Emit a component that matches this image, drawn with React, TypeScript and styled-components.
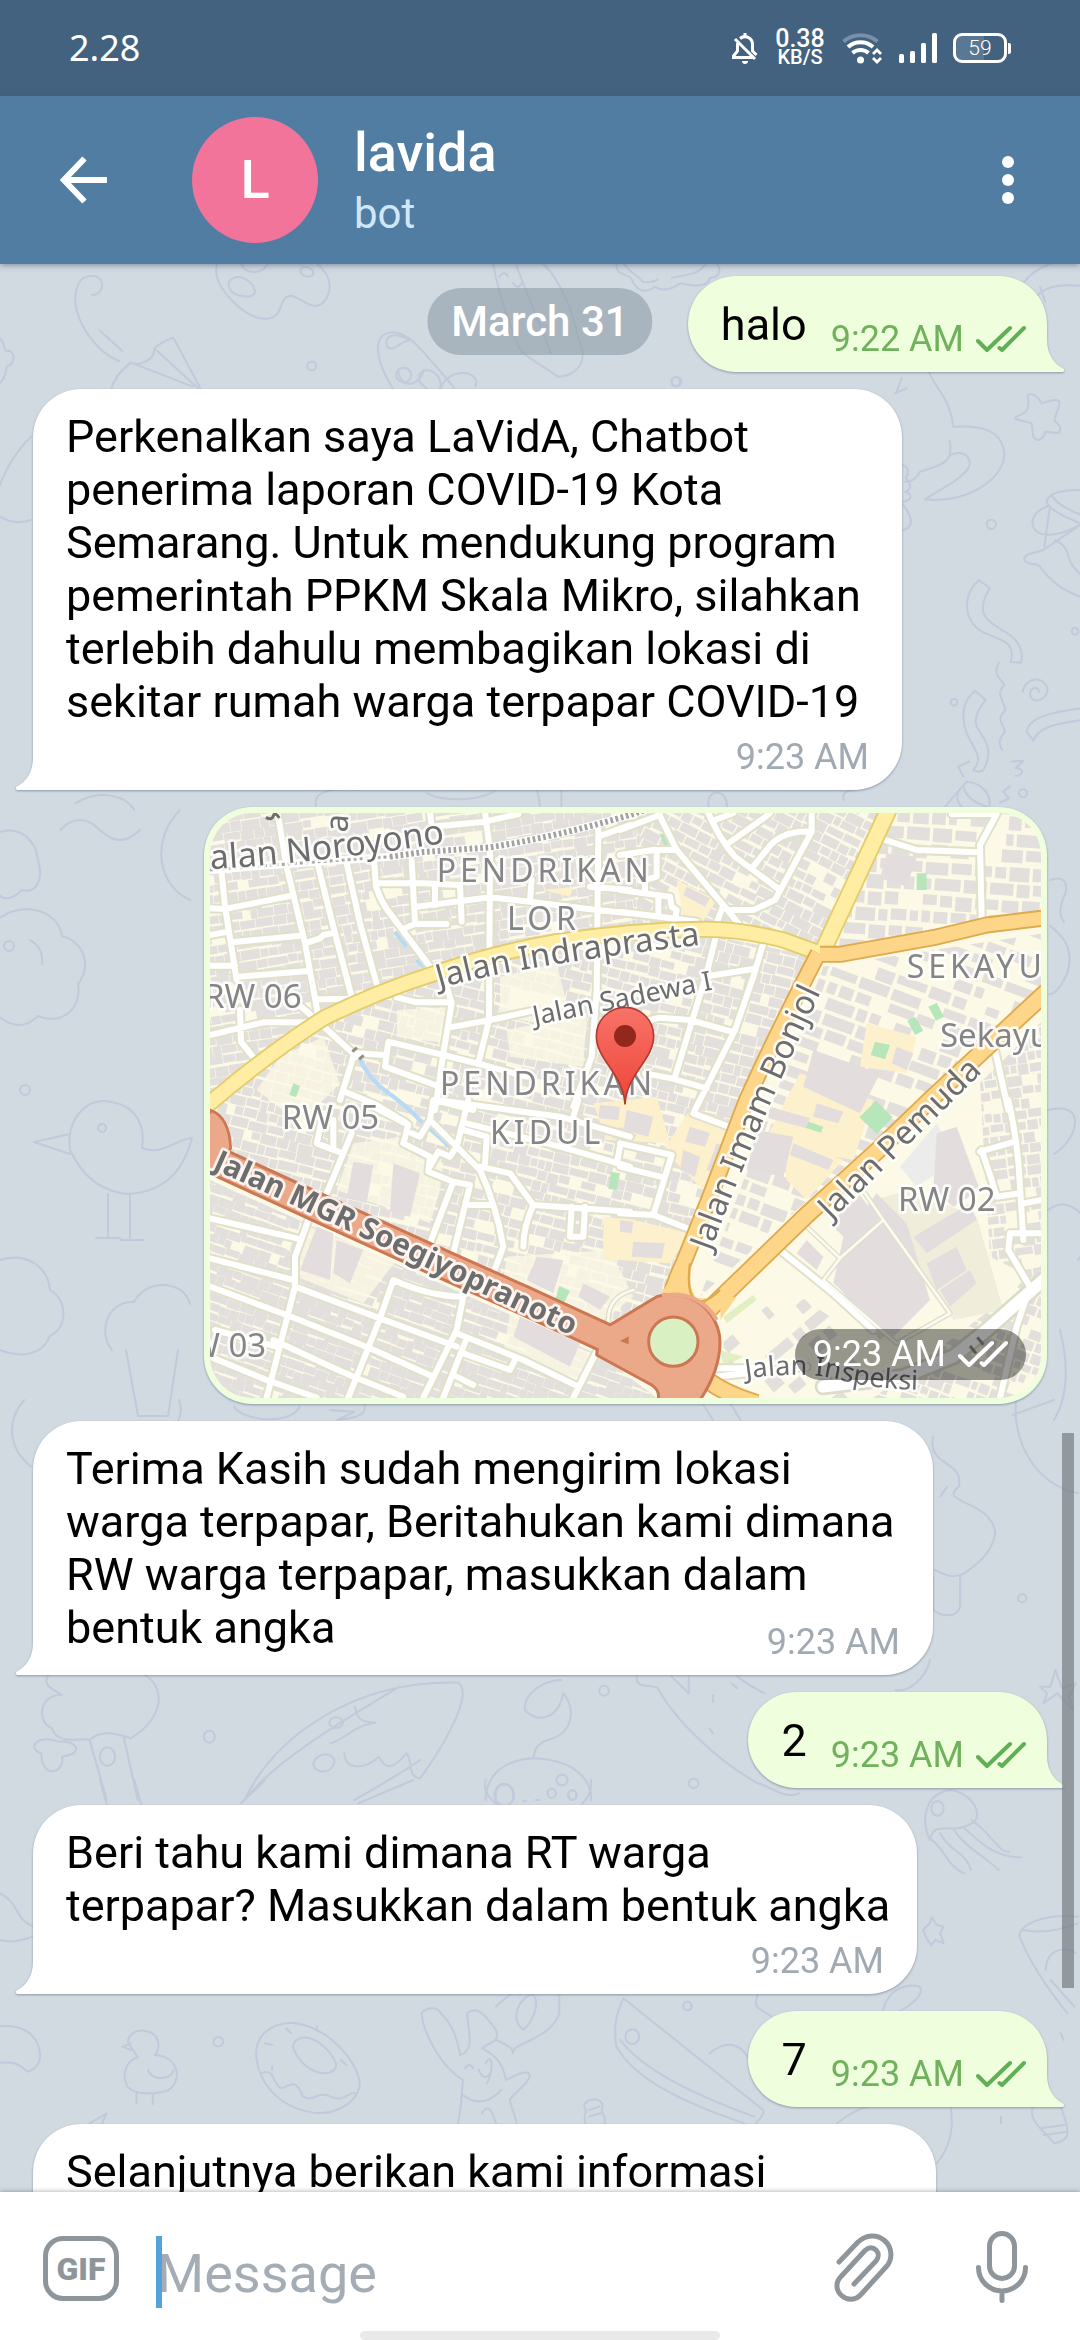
import React from 'react';
import styled, { createGlobalStyle, css } from 'styled-components';

const GlobalStyle = createGlobalStyle`
  *, *::before, *::after { box-sizing: border-box; }
  html, body { margin: 0; padding: 0; }
  body { font-family: Roboto, 'Noto Sans', sans-serif; background: #fff; }
  button { appearance: none; border: 0; padding: 0; background: none; font: inherit; color: inherit; cursor: pointer; }
`;

/* ---------- shell ---------- */

const Screen = styled.div`
  display: flex;
  flex-direction: column;
  height: 100vh;
  overflow: hidden;
`;

const StatusBar = styled.div`
  display: flex;
  align-items: center;
  justify-content: space-between;
  flex: none;
  height: 96px;
  padding: 0 69px;
  background: #43627f;
  color: #fff;
`;

const Clock = styled.time`
  font-family: 'Noto Sans', sans-serif;
  font-size: 36px;
  line-height: 50px;
`;

const StatusIcons = styled.div`
  display: flex;
  align-items: center;
  gap: 16px;
`;

const NetSpeed = styled.div`
  display: flex;
  flex-direction: column;
  align-items: center;
  width: 52px;
  font-weight: 500;
`;

const NetLine = styled.span<{ $size: number; $line: number }>`
  font-size: ${(p) => p.$size}px;
  line-height: ${(p) => p.$line}px;
`;

const Battery = styled.div`
  position: relative;
  display: flex;
  align-items: center;
  justify-content: center;
  width: 54px;
  height: 30px;
  margin-right: 4px;
  border: 3px solid #fff;
  border-radius: 9px;
  background: linear-gradient(90deg, #5a7793 59%, transparent 59%);
  font-size: 21px;
  font-weight: 300;
  line-height: 24px;

  &::after {
    content: '';
    position: absolute;
    right: -7px;
    top: 7px;
    width: 3px;
    height: 11px;
    border-radius: 0 2px 2px 0;
    background: #fff;
  }
`;

const Header = styled.header`
  position: relative;
  z-index: 2;
  display: flex;
  align-items: center;
  flex: none;
  height: 168px;
  padding: 0 36px 0 48px;
  background: #517da2;
  color: #fff;
  box-shadow: 0 1px 6px rgba(60, 80, 100, 0.6);
`;

const IconButton = styled.button`
  display: flex;
  align-items: center;
  justify-content: center;
  flex: none;
  width: 72px;
  height: 96px;
`;

const Avatar = styled.div`
  display: flex;
  align-items: center;
  justify-content: center;
  flex: none;
  width: 126px;
  height: 126px;
  margin: 0 36px 0 72px;
  border-radius: 50%;
  background: #f2749a;
  font-size: 54px;
  font-weight: 500;
  line-height: 64px;
`;

const Titles = styled.div`
  display: flex;
  flex-direction: column;
  flex: 1;
  gap: 4px;
  min-width: 0;
`;

const Title = styled.h1`
  margin: 0;
  font-size: 54px;
  font-weight: 500;
  line-height: 64px;
`;

const Subtitle = styled.span`
  color: #d0e7fa;
  font-size: 42px;
  line-height: 50px;
`;

/* ---------- conversation ---------- */

const Chat = styled.main`
  position: relative;
  flex: 1;
  min-height: 0;
  overflow: hidden;
  background: #d1d9e1;
`;

const Wallpaper = styled.svg`
  position: absolute;
  inset: 0;
  width: 100%;
  height: 100%;
`;

const MessageList = styled.ol`
  position: relative;
  display: flex;
  flex-direction: column;
  gap: 17px;
  margin: 0;
  padding: 12px 33px 0;
  list-style: none;
`;

const Row = styled.li<{ $out?: boolean }>`
  display: flex;
  justify-content: ${(p) => (p.$out ? 'flex-end' : 'flex-start')};
`;

const bubbleBase = css`
  position: relative;
  max-width: 100%;
  filter: drop-shadow(0 1px 1px rgba(90, 112, 130, 0.6));
`;

const IncomingBubble = styled.div<{ $width: number }>`
  ${bubbleBase}
  display: flow-root;
  width: ${(p) => p.$width}px;
  padding: 21px 24px 12px 33px;
  border-radius: 48px 48px 48px 0;
  background: #fff;
`;

const OutgoingBubble = styled.div`
  ${bubbleBase}
  display: flex;
  align-items: flex-end;
  gap: 24px;
  height: 96px;
  padding: 0 21px 12px 33px;
  border-radius: 48px 48px 0 48px;
  background: #effedd;
`;

const Text = styled.p<{ $inline?: boolean; $tall?: boolean }>`
  margin: 0;
  color: #000;
  font-size: 45px;
  line-height: 53px;
  padding-bottom: ${(p) => (p.$inline ? 9 : 0)}px;
  min-height: ${(p) => (p.$tall ? 156 : 0)}px;
`;

const Stamp = styled.time<{ $tone: 'in' | 'out' | 'media' }>`
  display: flex;
  align-items: center;
  justify-content: flex-end;
  gap: 12px;
  padding-right: ${(p) => (p.$tone === 'in' ? 9 : 0)}px;
  font-size: 36px;
  line-height: 42px;
  white-space: nowrap;
  color: ${(p) => ({ in: '#a1aab3', out: '#70b15c', media: '#fff' })[p.$tone]};
`;

const LastLine = styled.div`
  display: flex;
  align-items: flex-end;
  justify-content: space-between;
`;

const BelowText = styled.div`
  margin-top: 8px;
`;

const TailShape = styled.svg<{ $out?: boolean }>`
  position: absolute;
  bottom: 0;
  ${(p) => (p.$out ? 'right: -17px; transform: scaleX(-1);' : 'left: -17px;')}
`;

const MapBubble = styled.div`
  ${bubbleBase}
  width: 843px;
  padding: 6px;
  border-radius: 48px;
  background: #effedd;
`;

const MapDrawing = styled.svg`
  display: block;
  width: 100%;
  height: auto;
  border-radius: 42px;
`;

const MediaStamp = styled.div`
  position: absolute;
  right: 21px;
  bottom: 24px;
  padding: 4px 18px 5px;
  border-radius: 26px;
  background: rgba(0, 0, 0, 0.4);
`;

const DatePill = styled.time`
  position: absolute;
  top: 24px;
  left: 50%;
  transform: translateX(-50%);
  padding: 9px 24px 8px;
  border-radius: 34px;
  background: rgba(135, 152, 164, 0.55);
  color: #fff;
  font-size: 42px;
  font-weight: 500;
  line-height: 50px;
  white-space: nowrap;
`;

const ScrollThumb = styled.div`
  position: absolute;
  right: 6px;
  top: 1169px;
  width: 12px;
  height: 555px;
  background: rgba(118, 124, 130, 0.7);
`;

/* ---------- composer ---------- */

const Composer = styled.form`
  position: relative;
  z-index: 2;
  flex: none;
  background: #fff;
  box-shadow: 0 -1px 4px rgba(60, 70, 80, 0.35);
`;

const ComposerRow = styled.div`
  display: flex;
  align-items: center;
  height: 139px;
  padding: 14px 52px 0 43px;
`;

const GifButton = styled.button`
  flex: none;
  width: 76px;
  height: 65px;
  border: 5px solid #8e969c;
  border-radius: 20px;
  color: #8e969c;
  font-size: 32px;
  font-weight: 900;
  line-height: 54px;
  text-align: center;
`;

const Field = styled.label`
  position: relative;
  flex: 1;
  min-width: 0;
  margin-left: 37px;
`;

const Caret = styled.span`
  position: absolute;
  left: 0;
  top: 3px;
  width: 6px;
  height: 72px;
  background: #55a1db;
`;

const Input = styled.input`
  display: block;
  width: 100%;
  height: 72px;
  padding: 9px 0 0 1px;
  border: 0;
  outline: 0;
  background: transparent;
  color: #000;
  font-family: inherit;
  font-size: 54px;
  line-height: 63px;
  caret-color: transparent;

  &::placeholder { color: #a4adb5; opacity: 1; }
`;

const Tools = styled.div`
  display: flex;
  gap: 82px;
`;

const HomeBar = styled.div`
  width: 33.4%;
  height: 9px;
  margin: 0 auto;
  border-radius: 5px;
  background: #e9e9e9;
`;

/* ---------- icons ---------- */

const BackIcon = () => (
  <svg width="48" height="48" viewBox="0 0 48 48" fill="none" stroke="#fff" strokeWidth="6">
    <path d="M24.5 2.5 4 24l20.500 21.500M4 24h43" />
  </svg>
);

const DotsIcon = () => (
  <svg width="12" height="48" viewBox="0 0 12 48" fill="#fff">
    <circle cx="6" cy="6" r="6" />
    <circle cx="6" cy="24" r="6" />
    <circle cx="6" cy="42" r="6" />
  </svg>
);

const BellOffIcon = () => (
  <svg width="26" height="32" viewBox="0 0 26 32" fill="none" stroke="#fff" strokeWidth="3">
    <path d="M13 1v3M8 6.500c5-4 12.500-1 12.500 6V19l4 4M5.500 11v8L1.500 24v1.500H21" />
    <path d="M3 7l20 20" />
    <path d="M10 29h6a3 3 0 0 1-6 0z" fill="#fff" stroke="none" />
  </svg>
);

const WifiIcon = () => (
  <svg width="41" height="32" viewBox="0 0 41 32" fill="none" stroke="#fff" strokeWidth="4">
    <path d="M1.500 9.500C11 1 26 1 35.500 9.500" stroke="#7890a8" />
    <path d="M6 15C13 8.500 24 8.500 31 15" />
    <path d="M10.500 21c4.500-4 11.500-4 16 0" />
    <circle cx="18.500" cy="28" r="3.500" fill="#fff" stroke="none" />
    <path d="M31 22l4-4 4 4M31 26l4 4 4-4" strokeWidth="2.800" />
  </svg>
);

const SignalIcon = () => (
  <svg width="38" height="32" viewBox="0 0 38 32" fill="#fff">
    <rect x="0" y="22" width="5" height="9" rx="1.500" />
    <rect x="11" y="19" width="5" height="12" rx="1.500" />
    <rect x="22" y="11" width="5" height="20" rx="1.500" />
    <rect x="33" y="1" width="5" height="30" rx="1.500" />
  </svg>
);

const ChecksIcon = ({ color }: { color: string }) => (
  <svg width="50" height="28" viewBox="0 0 50 28" fill="none" stroke={color} strokeWidth="4" strokeLinecap="round" strokeLinejoin="round">
    <path d="M2 16l9 9L34 3M23.500 23l2.500 2L48 3" />
  </svg>
);

const ClipIcon = () => (
  <svg width="60" height="72" viewBox="0 0 60 72" fill="none" stroke="#8e969c" strokeWidth="5" strokeLinecap="round" strokeLinejoin="round">
    <path d="M5 31 24 11C32 3.500 43 3 50.500 9.500c8 7 8.500 19 1.500 26.500L26 64.500c-5 5-13 5-18.500 0-6-5.500-6-13.500-.5-19L31 19.500c3.500-3.500 8-3.500 11-.500 3 3 3 7.500 0 11L20 53" />
  </svg>
);

const MicIcon = () => (
  <svg width="52" height="72" viewBox="0 0 52 72" fill="none" stroke="#8e969c" strokeWidth="5" strokeLinecap="round">
    <rect x="13.500" y="2.500" width="25" height="45" rx="12.500" />
    <path d="M2.500 36.500a23.500 23.500 0 0 0 47 0M26 61v8.500" />
  </svg>
);

const Tail = ({ out }: { out?: boolean }) => (
  <TailShape $out={out} width="18" height="32" viewBox="0 0 18 32" fill={out ? '#effedd' : '#fff'}>
    <path d="M17 0C17 14 10 24 1 28.500c-2 1-1 3.500 1 3.500h16V0z" />
  </TailShape>
);

/* ---------- wallpaper doodles ---------- */

const doodles: { t: string; d: string[] }[] = [
  {
    t: 'scale(.3444 .3333)',
    d: [
      'M268 885C290 885 300 865 295 845C285 822 245 822 228 850C205 900 225 960 260 1010C285 1045 310 1070 345 1083',
      'M288 990L355 1053',
      'M380 1088C350 1110 330 1140 320 1175M380 1088C400 1098 450 1085 448 1045C465 1030 485 1020 503 1013L582 1165M448 1045L575 1165M380 1088L560 1160',
      'M635 780C620 810 630 845 650 872C690 930 740 960 775 956C830 950 805 890 845 887C870 890 890 920 920 918C960 905 965 850 945 820C935 800 920 790 905 780',
      'M665 845C690 815 730 840 740 870C745 900 690 890 672 875C664 865 662 855 665 845zM700 790C710 825 760 825 778 790M872 812C880 790 910 805 910 822C905 835 875 832 872 812z',
      'M1140 1165C1090 1080 1080 1010 1130 998C1180 990 1210 1030 1320 1165M1122 1030C1120 1000 1150 1000 1190 1020C1160 1025 1150 1050 1135 1045C1125 1045 1122 1040 1122 1030z',
      'M1150 1125a22 22 0 1 0 44 0a22 22 0 1 0 -44 0M1240 1165C1200 1140 1215 1105 1250 1112C1285 1130 1285 1160 1270 1180',
      'M892 1098a13 13 0 1 0 26 0a13 13 0 1 0 -26 0M0 1015C15 1030 10 1060 25 1052C45 1060 45 1090 20 1100C15 1130 10 1140 -10 1160',
      'M1430 780C1440 850 1470 950 1510 1050C1540 1080 1580 1100 1620 1130C1660 1130 1700 1100 1690 1050L1660 940C1640 880 1600 800 1560 780M1500 800L1600 1060M1450 830q15 -20 25 0M1490 850q15 20 25 0',
      'M1790 790C1785 830 1830 820 1835 840C1855 890 1890 870 1900 860C1930 880 1960 860 1975 850C2010 860 2060 860 2060 835C2100 830 2090 800 2080 790M1810 790C1840 830 1860 830 1865 845C1880 850 1900 845 1910 838M1950 835C1970 825 2030 830 2050 790',
      'M2970 850C3000 810 3040 790 3090 780M3000 900C3030 860 3070 850 3140 858M3020 860l15 45M1950 1145a14 14 0 1 0 28 0a14 14 0 1 0 -28 0',
    ],
  },
  {
    t: 'translate(895 370) scale(.3333)',
    d: [
      'M400 90C390 65 420 65 440 100C460 95 495 80 493 100C490 130 470 150 482 155C500 170 500 190 485 188L452 185C440 215 425 215 415 200L410 160C380 150 355 150 362 142C380 130 405 130 400 90z',
      'M100 0C115 50 165 80 175 170C260 165 320 180 328 250C325 340 200 400 90 388C130 360 220 320 225 280C220 245 190 245 165 255C150 290 100 295 75 305C60 330 50 335 30 335M163 212C170 230 165 245 163 255',
      'M20 285C45 290 40 310 32 325C50 340 50 360 30 365C50 370 55 390 25 395M25 405C50 440 60 470 25 480M0 70L35 55M5 65L20 25',
      'M275 463a14 14 0 1 0 28 0a14 14 0 1 0 -28 0M167 997a10 10 0 1 0 20 0a10 10 0 1 0 -20 0M530 784a10 10 0 1 0 20 0a10 10 0 1 0 -20 0M372 1270a12 12 0 1 0 24 0a12 12 0 1 0 -24 0',
      'M560 360C500 358 455 370 455 400C480 430 520 445 560 462M470 375C480 400 520 420 560 435M460 408C400 430 400 480 440 492C480 500 520 485 555 465L445 540M465 410L448 530M445 540C420 550 385 550 388 570C400 590 420 575 435 590C470 640 510 665 560 682M480 510C540 540 500 570 560 615',
      'M252 630L285 655C230 740 290 760 345 795C380 820 385 860 378 878L347 876C365 810 310 810 260 785C200 745 205 670 252 630z',
      'M312 878C290 920 320 925 328 945C300 975 325 985 332 1020C300 1050 325 1060 330 1085C310 1110 310 1120 322 1140',
      'M383 965C390 920 450 915 458 960C450 1000 405 1000 405 970C410 950 430 950 432 965M240 962L272 990C200 1080 280 1080 280 1150C275 1200 260 1215 235 1200C280 1150 205 1120 205 1040C205 1000 220 980 240 962z',
      'M560 1015C480 1025 400 1040 395 1085L415 1112C430 1070 490 1060 560 1050M350 1175L385 1172L362 1195C390 1195 385 1215 362 1218M190 1190L222 1175M190 1190L205 1220M345 1248L325 1265L342 1285L315 1298',
      'M150 1310L215 1235C260 1240 290 1270 283 1310M190 1270Q180 1290 200 1310M205 1245Q210 1290 275 1310',
    ],
  },
  {
    t: 'translate(0 370) scale(.6888 .3333)',
    d: [
      'M45 200C10 270 0 350 -10 390M0 440C15 460 30 460 45 450',
      'M578 0C580 60 610 50 615 0M640 55C650 -10 700 0 690 50M975 35a6 14 0 1 0 12 0a6 14 0 1 0 -12 0',
      'M110 1300C140 1260 180 1270 195 1320M460 1320C450 1260 480 1255 520 1260M620 1270C650 1300 700 1290 720 1260M780 1260L785 1320M815 1260V1320M1030 1320C1020 1250 1060 1250 1055 1320M1225 1290C1220 1260 1240 1260 1240 1260',
    ],
  },
  {
    t: 'translate(0 790)',
    d: [
      'M0 42C20 36 36 50 38 70C44 90 36 104 22 100C10 112 0 110 -4 100M4 156a5 5 0 1 0 10 0a5 5 0 1 0 -10 0',
      'M0 128C20 112 58 118 62 146C84 152 92 176 78 194C82 220 60 236 38 226C24 240 8 236 -4 224M30 150q14 8 12 24',
      'M70 360C66 330 86 306 112 312C136 316 146 336 142 358C164 366 172 350 192 348C182 386 160 402 128 404C104 402 84 390 70 360zM70 344L34 352L70 364M108 404V446M130 404V448M96 448h24M120 450h24M98 338a4 4 0 1 0 8 0a4 4 0 1 0-8 0',
      'M0 470C26 462 48 476 50 500C68 510 68 538 50 546C42 566 20 568 0 560M180 20C150 50 158 96 190 110M60 40q20 -20 40 0q20 20 40 0',
      'M112 560C96 540 110 510 134 512C146 488 184 490 190 514M126 560L138 626H168L178 560M20 300a5 5 0 1 0 10 0a5 5 0 1 0 -10 0',
      'M1050 90q18 -6 16 12q-10 20 -2 30M1050 136q28 20 16 50q-10 20 -18 18M1048 320c40-10 30 30 6 44M1048 420c26-20 56 20 30 50M1060 540c10 40 6 70-6 90',
    ],
  },
  {
    t: 'translate(0 1400) scale(.6888 .3333)',
    d: [
      'M35 0C10 60 10 140 45 200M260 0C265 30 262 50 258 65M340 20C350 60 420 80 435 20M480 30L515 35L490 60C540 50 530 20 528 0',
      'M1020 10L1035 60M1060 10L1075 60M1355 110C1345 200 1400 180 1392 260C1360 310 1440 300 1445 400C1440 460 1420 490 1400 520C1380 540 1370 520 1356 510M1355 530V630C1370 655 1390 650 1394 620V525M1375 260L1365 290',
      'M1470 45L1530 0M1475 0C1470 120 1500 250 1565 280M1478 595a6 12 0 1 0 12 0a6 12 0 1 0 -12 0M870 872a7 15 0 1 0 14 0a7 15 0 1 0 -14 0M296 1010a8 18 0 1 0 16 0a8 18 0 1 0 -16 0',
      'M1510 860L1525 860L1532 810L1542 865L1562 850L1552 890L1558 930L1535 880L1515 910L1520 880z',
      'M70 825C60 860 80 870 90 885C60 880 50 960 75 985C85 1040 120 1010 130 1020C150 980 180 1010 190 1015C240 950 240 860 210 825M130 1020L155 1200M180 1015L200 1200M85 1025C50 1000 40 1050 60 1060C60 1140 95 1120 90 1070C125 1060 110 1020 85 1025M145 1070a11 28 0 1 0 22 0a11 28 0 1 0 -22 0',
      'M355 1200C400 1000 520 840 665 848C690 880 640 1050 610 1135C590 1130 600 1080 590 1060C570 1110 560 1110 550 1070C530 1110 500 1110 500 1060M580 860C500 960 400 1080 355 1200M610 1080C560 1150 530 1180 515 1200M515 920C520 970 530 965 545 968C510 980 500 1020 480 1030M478 968a10 16 0 1 0 20 0a10 16 0 1 0 -20 0M455 1090C460 1050 490 1060 485 1090C480 1125 455 1120 455 1090z',
      'M815 840C790 840 760 880 762 930C780 970 810 960 818 880C835 920 835 1000 795 1020C780 1030 775 1050 775 1075C720 1080 705 1150 705 1200M775 1075C840 1080 860 1150 858 1200M720 1200C715 1130 750 1140 745 1200M808 1140a8 16 0 1 0 16 0a8 16 0 1 0 -16 0M825 1185a6 14 0 1 0 12 0a6 14 0 1 0 -12 0',
      'M925 830C920 870 950 850 955 865C980 960 1040 1080 1100 1150C1120 1160 1140 1200 1160 1180M975 830L1000 880L1000 830M1035 885v20M1062 850l8 15M1030 985l5 15M1070 830Q1090 860 1110 880M1300 870C1320 880 1345 830 1350 780M1000 1150a7 14 0 1 0 14 0a7 14 0 1 0 -14 0',
    ],
  },
  {
    t: 'translate(0 1780) scale(.6888 .3333)',
    d: [
      'M145 0L155 73M195 0L205 73M350 70L385 0M520 70L600 0M705 0C700 40 715 60 720 72M858 0C860 40 850 60 845 72M718 45a14 32 0 1 0 28 0a14 32 0 1 0 -28 0M795 40a6 14 0 1 0 12 0a6 14 0 1 0 -12 0M825 45a6 14 0 1 0 12 0a6 14 0 1 0 -12 0M760 62h4M778 60h4',
      'M1350 180C1335 110 1345 40 1380 30C1410 40 1420 90 1418 100C1422 130 1400 140 1390 145C1370 150 1355 130 1350 180zM1352 85a9 22 0 1 0 18 0a9 22 0 1 0 -18 0M1350 175C1370 200 1375 260 1400 280M1365 160C1380 220 1400 210 1410 270M1385 150C1400 200 1430 230 1450 270M1400 145C1420 180 1440 230 1482 232M1410 120C1440 160 1450 220 1465 215',
      'M1340 450L1350 430L1353 412L1360 435L1370 440L1365 460L1370 490L1358 480L1352 495L1345 475z',
      'M1565 410C1520 400 1480 430 1480 470C1490 520 1510 600 1550 700M1485 450C1510 460 1540 450 1565 430M1518 570C1520 500 1550 500 1562 520M1525 600L1560 680',
      'M-5 740C30 730 55 760 58 820C60 850 50 870 40 875C30 860 25 840 -5 850M0 340C30 370 20 420 50 440M0 480C20 490 30 480 48 470',
      'M190 800C180 780 190 750 210 752C235 760 232 810 225 825C260 830 265 900 245 930C225 945 195 945 185 920C175 880 185 840 200 832zM190 790L178 800L190 810M215 870C220 905 250 900 252 870M198 940V970M222 942V972M310 785a7 14 0 1 0 14 0a7 14 0 1 0 -14 0',
      'M372 830C370 770 390 730 425 728C480 740 525 860 522 920C515 980 480 1005 455 998C400 980 375 900 372 830zM425 800C430 750 470 770 488 850C490 900 440 890 425 800zM380 880C400 860 395 920 410 925C425 910 430 900 440 950C455 970 460 930 480 950C500 970 510 930 515 940M415 745l8 15M460 740v12M385 790l10 5M495 840l8 15M395 860v10',
      'M665 1030C670 980 670 950 672 900C640 860 615 760 612 700C620 680 635 680 640 700C660 740 665 790 668 825C690 810 680 760 678 700C690 680 700 690 720 750C728 790 705 790 700 805C725 830 730 860 735 900C745 890 760 870 768 880C775 900 745 940 740 960C745 1000 750 1020 750 1030M675 865q6 -20 12 0M695 870q8 40 18 5M705 850c10 -40 12 20 2 60M672 945Q700 990 728 930M700 1000Q710 960 720 1030',
      'M720 680C740 640 750 630 755 645M720 780C730 790 745 800 745 820C740 790 800 780 812 700V645M755 740C740 700 760 640 775 645C785 680 770 730 760 750zM992 678a6 13 0 1 0 12 0a6 13 0 1 0 -12 0',
      'M905 655C895 700 890 740 895 800C920 890 980 960 1080 1030M905 655L1108 990C1110 1010 1100 1020 1098 1030M900 780C930 860 990 930 1095 1010M908 770a10 22 0 1 0 20 0a10 22 0 1 0 -20 0M1030 820C1060 770 1080 800 1090 850M1100 645C1090 690 1110 690 1120 710M1282 690C1290 620 1320 610 1335 620C1345 650 1310 690 1305 695',
      'M850 1030C845 1000 855 1000 848 980C850 950 875 950 875 980C870 1000 880 1000 878 1030M855 990L870 980M855 1010L872 1000M130 1030L155 1000L148 1030M1215 1030Q1240 990 1260 980M1380 980C1385 1040 1380 1100 1360 1150M1500 980C1490 1020 1520 1060 1530 1090C1560 1080 1550 1040 1540 980M1510 1045L1545 1035M1515 1065L1550 1055M1453 1010v20M1540 760l4 20',
    ],
  },
];

const Doodles = () => (
  <Wallpaper viewBox="0 264 1080 1928" preserveAspectRatio="xMidYMin slice" aria-hidden="true">
    <g fill="none" stroke="#c2c9db" strokeWidth="2" strokeLinecap="round" strokeLinejoin="round">
      {doodles.map((g, i) => (
        <g key={i} transform={g.t}>
          {g.d.map((d, j) => (
            <path key={j} d={d} vectorEffect="non-scaling-stroke" />
          ))}
        </g>
      ))}
    </g>
  </Wallpaper>
);

/* ---------- city map ---------- */

type Region = { area: string; angle: number; w: number; h: number; gap: number; fill: number; seed: number };

const regions: Region[] = [
  { area: 'M60 69H1340V425L1100 455 735 540 400 680 60 940z', angle: -9, w: 42, h: 30, gap: 2, fill: 0.93, seed: 3 },
  { area: 'M1340 69H2095L1880 480 1530 418 1340 425z', angle: 27, w: 42, h: 32, gap: 4, fill: 0.92, seed: 8 },
  { area: 'M60 950 400 690 735 550 1100 470 1530 430 1880 500 1670 930 1450 1500 1240 1640 60 1100z', angle: 14, w: 42, h: 32, gap: 3, fill: 0.9, seed: 5 },
  { area: 'M60 1170 1240 1700 1400 1824H60z', angle: 19, w: 40, h: 28, gap: 1, fill: 0.97, seed: 12 },
  { area: 'M2110 69H2560V370L1930 480z', angle: 4, w: 60, h: 50, gap: 10, fill: 0.8, seed: 21 },
  { area: 'M1900 530 2560 430V600L1530 1520z', angle: 20, w: 72, h: 46, gap: 11, fill: 0.74, seed: 14 },
  { area: 'M2370 880 2560 690V1480L2400 1400z', angle: -8, w: 40, h: 34, gap: 5, fill: 0.9, seed: 30 },
  { area: 'M1600 1640 1800 1500 1950 1600 2050 1824H1600z', angle: -40, w: 70, h: 56, gap: 16, fill: 0.6, seed: 41 },
  { area: 'M2400 1560 2560 1420V1824H2050z', angle: 20, w: 40, h: 34, gap: 6, fill: 0.8, seed: 52 },
];

function footprints({ w, h, gap, fill, seed }: Region) {
  let s = seed * 7919;
  const rnd = () => {
    s = (s * 1103515245 + 12345) % 2147483648;
    return s / 2147483648;
  };
  const out: string[] = [];
  for (let y = -1900; y < 1900; y += h) {
    for (let x = -2000; x < 2000; ) {
      const bw = Math.round(w * (0.5 + rnd()));
      const bh = Math.round((h - gap) * (0.75 + rnd() * 0.35));
      if (rnd() < fill) out.push(`M${x} ${y + Math.round(rnd() * 4)}h${bw - gap}v${bh}h${gap - bw}z`);
      x += bw;
    }
  }
  return out.join('');
}

const openLand = [
  'M930 560L1100 520 1130 640 1050 700 930 680z',
  'M950 720L1190 670 1180 830 960 800z',
  'M620 660L780 650 770 760 620 740z',
  'M270 800L400 740 450 880 330 1000 200 900z',
  'M490 1060L640 1040 760 1120 750 1200 720 1300 440 1200z',
  'M350 1310L620 1410 520 1540 320 1460z',
  'M950 1400L1260 1380 1330 1520 1240 1590 940 1470z',
  'M960 1570L1200 1690 1170 1780 940 1690z',
];

const schoolGrounds = [
  'M1210 940L1400 920 1440 1060 1250 1050z',
  'M1460 270L1580 330 1540 390 1480 380z',
  'M1060 300L1150 290 1140 320z',
  'M1290 1280L1500 1330 1440 1420 1290 1410z',
  'M1240 1280L1320 1290V1410H1240z',
  'M1830 850L2050 930 1990 1110 1720 1060z',
  'M2030 700L2180 740 2150 850 2010 830z',
  'M1780 1040L1960 1110 1850 1230 1790 1170z',
  'M1500 960L1640 1000 1560 1220 1420 1080z',
];

const bigBuildings = [
  'M490 1115L550 1125 530 1240 470 1225z',
  'M610 1120L690 1150 660 1280 600 1265z',
  'M380 1310L430 1330 420 1470 330 1440z',
  'M440 1350L520 1380 480 1480 430 1450z',
  'M990 1580L1170 1660 1140 1730 970 1640z',
  'M1040 1400L1120 1410 1090 1510 1010 1470z',
  'M1180 1480L1260 1520 1230 1560 1165 1520z',
  'M1870 780L2070 850 2010 970 1840 890z',
  'M1700 1020L1810 1040 1780 1160 1670 1140z',
  'M2090 190L2180 200 2150 290 2070 265z',
  'M1960 1340L2060 1210 2150 1300 2220 1530 2110 1640 1930 1480z',
  'M2060 1330L2210 1530 2070 1650 1930 1470z',
  'M1920 1300L2010 1215 2050 1270 1980 1360z',
  'M1850 1350L1900 1400 1880 1440 1820 1390z',
  'M2240 1030L2300 1010 2370 1200 2290 1250 2230 1200z',
  'M2170 1340L2340 1240 2360 1290 2210 1390z',
  'M2210 1420L2300 1370 2330 1440 2240 1500z',
  'M2250 1500L2340 1440 2360 1480 2280 1550z',
  'M1230 945L1290 950 1285 990 1225 985z',
  'M1310 960L1390 980 1375 1040 1300 1020z',
  'M1290 1010L1340 1035 1330 1050 1265 1045z',
  'M1490 290L1560 325 1545 350 1480 315z',
  'M1330 1355L1425 1360 1415 1405 1325 1400z',
  'M1290 1290L1330 1295 1325 1330 1290 1325z',
  'M1500 1010L1560 1030 1545 1070 1485 1055z',
  'M1580 1060L1620 1070 1590 1160 1550 1140z',
  'M1480 1080L1530 1100 1515 1160 1470 1140z',
  'M1880 940L1960 965 1945 1000 1870 980z',
  'M1810 1060L1930 1110 1915 1140 1800 1095z',
  'M2120 770L2170 790 2150 840 2105 820z',
  'M1740 950L1860 985 1850 1015 1735 985z',
];

const parks = [
  'M310 880L330 888 318 922 298 914z',
  'M1408 130L1420 132 1438 165 1425 168z',
  'M2180 250H2210V300H2180z',
  'M2215 650L2240 638 2262 680 2238 692z',
  'M2152 692L2175 680 2200 722 2175 735z',
  'M2055 755L2100 765 2085 808 2042 795z',
  'M2058 932L2108 982 2060 1032 2008 982z',
  'M1855 995L1900 1010 1893 1028 1848 1014z',
  'M1263 1145L1290 1150 1280 1200 1255 1196z',
  'M1108 1488L1140 1502 1122 1540 1095 1530z',
];

const minorRoads: { x: number; y: number; d: string }[] = [
  {
    x: 0,
    y: 0,
    d: 'M262 69L270 110 290 230 345 460 385 680M95 250L105 350 140 570M385 230L430 410 490 640M470 220L510 400 565 600M552 210L558 290Q575 340 600 370L720 530M60 355L105 357 300 318M60 435L115 425M125 457L330 437M345 460L390 445 400 435 435 428M60 527H135M145 560L355 543M385 628L485 626M620 622L680 637H785M150 660L153 755 200 815M60 735L220 697H360M310 630L380 690 500 800M665 210L675 400M565 280H700L810 285 815 395M735 285V345M680 350L900 322 1020 335 1220 360 1320 370M645 415L675 402H770M885 69L900 180 897 690 865 820M725 110L885 95 985 72M720 69L725 110M1225 115L1220 600 1205 800 1150 950M1225 140L1320 105M1200 290L1320 300M1025 270L1020 330M765 570L785 640 760 790 735 960M780 712L900 690 1030 662M735 885L585 830 595 755 760 795 880 825 1010 860M500 790L585 795M490 800L450 930M465 905L560 945 650 1000M735 930L850 960',
  },
  {
    x: 1290,
    y: 0,
    d: 'M115 69L170 180 310 345 355 400M0 120L120 75M0 195L100 180H165M110 180V260L75 270V300M0 300L150 320 155 350 170 360 165 390M115 320V380M0 365L120 380 230 395M265 69Q300 150 345 200L480 300M285 90L340 69M325 160L430 85 450 69M575 69V125L465 330 400 360H330M395 235L440 180Q480 120 575 125M310 345L290 400M290 430L260 550 165 860M430 460L400 560 345 720 225 960M250 560L400 537M90 690L120 683 210 690 335 725M75 850L155 865 260 895M780 145L890 180 1080 187M995 72H1130L1080 165 1085 385M1125 780L1165 960',
  },
  {
    x: 1290,
    y: 930,
    d: 'M1165 0Q1195 130 1200 260L1210 420M1080 155L1185 125M1085 150L1115 240 1130 290 1200 280M1170 400H1265M1170 400L1165 450 1230 560 1190 680 1140 893M1210 310L1265 300M485 455L560 515 640 580 760 690M0 130L155 165 100 345M0 200L130 232M0 340L100 345 215 390M240 0L220 40 340 85M285 805L400 805M285 830L560 800',
  },
  {
    x: 0,
    y: 930,
    d: 'M60 355L320 415M60 475L310 540M60 560L290 645 540 745 730 830M230 893L315 560V470L355 360M315 560L570 655 800 740M250 720L400 790 490 830 640 890M475 893L570 655 610 540Q720 590 820 590L800 690 700 893M75 690L260 740M60 770L230 840 380 893M800 700L1000 780 1165 860M1220 755L1150 893M830 715L760 893M820 760L960 810 975 780M800 830L850 855M400 40L380 130 445 155M430 60V145M485 100L410 280M550 20L655 75 640 130 720 170 715 215 790 245 840 255 790 460M790 245L720 430M690 110L665 100M730 0L720 60 800 140 870 210Q920 320 940 440L910 520M690 110L720 60M835 0L800 140 780 170 745 155 720 200M840 315H900M820 90L890 110 885 190M870 200L960 220 1030 315 1320 335M1030 315Q1000 380 1000 440M830 70L1110 140 1320 200M740 0L1110 50 1320 110M1145 320L1140 410H1180L1185 320M1165 0L1150 50M1290 140L1280 190',
  },
];

const lanes = 'M1850 1310L1950 1405 1900 1470M1950 1405L2080 1290 2025 1210M2080 1290L2280 1570 2120 1660 1900 1470M1255 1600Q1250 1520 1330 1500';

const yellowRoad = 'M30 965Q220 800 400 685Q560 605 735 550Q900 490 1100 455Q1320 420 1530 418Q1640 415 1780 450L1890 490';
const yellowNorth = 'M2100 50L1895 490';
const orangeEast = 'M1890 493H1950L2230 443 2390 405 2570 383';
const imamBonjol = 'M1885 490Q1760 730 1670 930L1560 1220 1480 1420Q1450 1480 1430 1560';
const pemuda = 'M2570 605L2220 930 2070 1075 1850 1275 1690 1430 1540 1575';
const salmonRoad = 'M50 1100L400 1260 730 1410 1000 1530 1260 1650';
const salmonFunnel = 'M1230 1600L1260 1605 1400 1520A146 146 0 0 1 1590 1655Q1590 1740 1530 1830H1405Q1410 1800 1385 1785L1220 1695z';

const labels: { x: number; y: number; size: number; text: string; spacing?: number }[] = [
  { x: 740, y: 275, size: 96, text: 'PENDRIKAN', spacing: 12 },
  { x: 951, y: 420, size: 96, text: 'LOR', spacing: 12 },
  { x: 750, y: 915, size: 96, text: 'PENDRIKAN', spacing: 12 },
  { x: 900, y: 1062, size: 96, text: 'KIDUL', spacing: 12 },
  { x: 2150, y: 565, size: 96, text: 'SEKAYU', spacing: 12 },
  { x: 2250, y: 770, size: 99, text: 'Sekayu' },
  { x: 42, y: 655, size: 99, text: 'RW 06' },
  { x: 275, y: 1018, size: 99, text: 'RW 05' },
  { x: -64, y: 1702, size: 99, text: 'RW 03' },
  { x: 2124, y: 1262, size: 99, text: 'RW 02' },
];

const roadLabels: { id: string; d: string; size: number; text: string; bold?: boolean }[] = [
  { id: 'noroyono', d: 'M62 238Q420 215 820 150', size: 102, text: 'alan Noroyono' },
  { id: 'indraprasta', d: 'M748 595Q1000 522 1640 452', size: 99, text: 'Jalan Indraprasta' },
  { id: 'sadewa', d: 'M1034 706L1700 572', size: 81, text: 'Jalan Sadewa I' },
  { id: 'imam', d: 'M1562 1385Q1700 1010 1940 505', size: 99, text: 'Jalan Imam Bonjol' },
  { id: 'pemuda', d: 'M1924 1292L2480 745', size: 99, text: 'Jalan Pemuda' },
  { id: 'mgr', d: 'M66 1136L320 1250 700 1428 1260 1692', size: 90, text: 'Jalan MGR Soegiyopranoto', bold: true },
  { id: 'inspeksi', d: 'M1668 1766Q1850 1740 1960 1772T2300 1800', size: 81, text: 'Jalan Inspeksi' },
];

const CityMap = () => (
  <MapDrawing viewBox="60 69 2493 1755" role="img" aria-label="Map">
    <defs>
      <linearGradient id="pin" x1="0" y1="0" x2="0" y2="1">
        <stop offset="0" stopColor="#f87368" />
        <stop offset="1" stopColor="#ee4438" />
      </linearGradient>
      {regions.map((r, i) => (
        <clipPath key={i} id={`area${i}`}>
          <path d={r.area} />
        </clipPath>
      ))}
      {roadLabels.map((l) => (
        <path key={l.id} id={l.id} d={l.d} />
      ))}
    </defs>
    <rect x="60" y="69" width="2493" height="1755" fill="#fcfae6" />
    <path d="M2130 1130L2240 1000 2300 1110 2180 1190z" fill="#ececec" />
    <path d="M2160 1200L2360 1280 2440 1560 2290 1590 2050 1230z" fill="#f0eedb" />
    <path d="M1600 1580L1690 1515 1700 1530 1610 1600zM1590 1680L1660 1700 1600 1730z" fill="#e2efc2" />
    {regions.map((r, i) => (
      <g key={i} clipPath={`url(#area${i})`}>
        <path transform={`translate(1300 950) rotate(${r.angle})`} d={footprints(r)} fill="#e3dfdc" />
      </g>
    ))}
    <path d={openLand.join('')} fill="#fcfae6" fillOpacity="0.75" />
    <path d={schoolGrounds.join('')} fill="#fdf0cc" />
    <path d={bigBuildings.join('')} fill="#e3dedd" />
    <path d={parks.join('')} fill="#b7e6ba" />
    <path d="M415 720L500 790M508 805Q540 870 590 905T690 990L780 1070M615 425L650 470M680 510L700 530" fill="none" stroke="#b8daf5" strokeWidth="13" />

    <g fill="none" strokeLinejoin="round" strokeLinecap="round">
      {minorRoads.map((g, i) => (
        <path key={i} transform={`translate(${g.x} ${g.y})`} d={g.d} stroke="#e1e0c9" strokeWidth="30" />
      ))}
      <path d={lanes} stroke="#dfdfc8" strokeWidth="16" />
      <path d="M2560 1470L2390 1620 2290 1700 2140 1760 1900 1790" stroke="#dcdcc8" strokeWidth="52" />
      {minorRoads.map((g, i) => (
        <path key={i} transform={`translate(${g.x} ${g.y})`} d={g.d} stroke="#fff" strokeWidth="18" />
      ))}
      <path d={lanes} stroke="#fbfbf6" strokeWidth="8" />
      <path d="M2560 1470L2390 1620 2290 1700 2140 1760 1900 1790" stroke="#fff" strokeWidth="36" />
    </g>
    <path d="M2340 1668l18 22M2362 1642l18 22M487 785l14 -12M507 808l14 -12" stroke="#8f8f88" strokeWidth="9" />

    <g fill="none">
      <path d="M60 240L250 225 600 200 700 186 900 172Q1100 140 1320 75L1380 55" stroke="#fff" strokeWidth="24" />
      <path d="M60 240L250 225 600 200" stroke="#a9a9a5" strokeWidth="9" strokeDasharray="9 9" />
      <path d="M600 200L700 186 900 172Q1100 140 1320 75L1380 55" stroke="#a2a29e" strokeWidth="18" strokeDasharray="8 8" />
    </g>

    <g fill="none" strokeLinejoin="round">
      <path d={yellowRoad} stroke="#e2cd6c" strokeWidth="51" />
      <path d={yellowNorth} stroke="#e2cd6c" strokeWidth="55" />
      <path d={yellowRoad} stroke="#feeda2" strokeWidth="40" />
      <path d={yellowNorth} stroke="#feeda2" strokeWidth="44" />
      <path d={orangeEast} stroke="#dfa94d" strokeWidth="51" />
      <path d={imamBonjol} stroke="#dfa94d" strokeWidth="52" />
      <path d={pemuda} stroke="#dfa94d" strokeWidth="56" />
      <path d="M1520 1740Q1570 1800 1700 1840" stroke="#dfa94d" strokeWidth="56" />
      <path d={orangeEast} stroke="#fed68a" strokeWidth="40" />
      <path d={imamBonjol} stroke="#fed68a" strokeWidth="41" />
      <path d={pemuda} stroke="#fed68a" strokeWidth="45" />
      <path d="M1520 1740Q1570 1800 1700 1840" stroke="#fed68a" strokeWidth="45" />
      <path d="M1440 1470Q1420 1500 1405 1525H1560Q1600 1540 1590 1590L1640 1520 1530 1535Q1490 1500 1505 1430z" fill="#fed68a" />
      <path d="M1500 1420Q1485 1535 1535 1535Q1560 1530 1590 1500" stroke="#dfa94d" strokeWidth="7" />
    </g>

    <g strokeLinejoin="round">
      <path d="M60 960Q118 980 122 1075L60 1150z" fill="#eba98a" stroke="#cc7752" strokeWidth="8" />
      <path d={salmonRoad} fill="none" stroke="#cc7752" strokeWidth="92" />
      <path d={salmonFunnel} fill="#eba98a" stroke="#cc7752" strokeWidth="9" />
      <path d={salmonRoad} fill="none" stroke="#eba98a" strokeWidth="74" />
      <path d="M50 965Q105 990 112 1075L60 1150z" fill="#eba98a" />
      <path d="M1416 1518A146 146 0 0 1 1580 1590" fill="none" stroke="#eba98a" strokeWidth="12" />
      <circle cx="1450" cy="1655" r="74" fill="#d9f0c2" stroke="#cc7752" strokeWidth="9" />
      <path d="M1290 1653l26 -14v24z" fill="#cc7752" />
    </g>

    <g fontFamily="'Noto Sans', sans-serif" fill="#858585" stroke="#fff" strokeOpacity="0.85" strokeWidth="16" strokeLinejoin="round" paintOrder="stroke">
      {labels.map((l, i) => (
        <text key={i} x={l.x} y={l.y} fontSize={l.size} style={{ letterSpacing: l.spacing ?? 0 }}>
          {l.text}
        </text>
      ))}
      {roadLabels.map((l) => (
        <text key={l.id} fontSize={l.size} fontWeight={l.bold ? 700 : 400} fill="#6d6d6d">
          <textPath href={`#${l.id}`}>{l.text}</textPath>
        </text>
      ))}
      <text transform="translate(472 128) rotate(-86)" fontSize="96" fill="#6d6d6d">a</text>
    </g>
    <path d="M228 82Q245 92 250 78T268 84" fill="none" stroke="#6d6d6d" strokeWidth="9" />

    <path d="M1305 943C1300 850 1219 810 1219 738A86 86 0 0 1 1391 738C1391 810 1310 850 1305 943z" fill="url(#pin)" stroke="#b23a30" strokeWidth="5" />
    <circle cx="1305" cy="738" r="33" fill="#92271c" />
  </MapDrawing>
);

/* ---------- page ---------- */

const Outgoing = ({ text, time }: { text: string; time: string }) => (
  <Row $out>
    <OutgoingBubble>
      <Text $inline>{text}</Text>
      <Stamp $tone="out">
        {time}
        <ChecksIcon color="#5fb054" />
      </Stamp>
      <Tail out />
    </OutgoingBubble>
  </Row>
);

const Incoming = ({ text, time, width }: { text: string; time?: string; width: number }) => (
  <Row>
    <IncomingBubble $width={width}>
      <Text $tall={!time}>{text}</Text>
      {time && (
        <BelowText>
          <Stamp $tone="in">{time}</Stamp>
        </BelowText>
      )}
      <Tail />
    </IncomingBubble>
  </Row>
);

export default function App() {
  return (
    <Screen>
      <GlobalStyle />
      <StatusBar>
        <Clock>2.28</Clock>
        <StatusIcons>
          <BellOffIcon />
          <NetSpeed>
            <NetLine $size={25} $line={19}>0.38</NetLine>
            <NetLine $size={20} $line={19}>KB/S</NetLine>
          </NetSpeed>
          <WifiIcon />
          <SignalIcon />
          <Battery>59</Battery>
        </StatusIcons>
      </StatusBar>

      <Header>
        <IconButton type="button" aria-label="Back">
          <BackIcon />
        </IconButton>
        <Avatar>L</Avatar>
        <Titles>
          <Title>lavida</Title>
          <Subtitle>bot</Subtitle>
        </Titles>
        <IconButton type="button" aria-label="More options">
          <DotsIcon />
        </IconButton>
      </Header>

      <Chat>
        <Doodles />
        <MessageList>
          <Outgoing text="halo" time="9:22 AM" />
          <Incoming
            width={869}
            time="9:23 AM"
            text="Perkenalkan saya LaVidA, Chatbot penerima laporan COVID-19 Kota Semarang. Untuk mendukung program pemerintah PPKM Skala Mikro, silahkan terlebih dahulu membagikan lokasi di sekitar rumah warga terpapar COVID-19"
          />
          <Row $out>
            <MapBubble>
              <CityMap />
              <MediaStamp>
                <Stamp $tone="media">
                  9:23 AM
                  <ChecksIcon color="#fff" />
                </Stamp>
              </MediaStamp>
            </MapBubble>
          </Row>
          <Row>
            <IncomingBubble $width={900}>
              <Text>Terima Kasih sudah mengirim lokasi warga terpapar, Beritahukan kami dimana RW warga terpapar, masukkan dalam</Text>
              <LastLine>
                <Text $inline>bentuk angka</Text>
                <Stamp $tone="in">9:23 AM</Stamp>
              </LastLine>
              <Tail />
            </IncomingBubble>
          </Row>
          <Outgoing text="2" time="9:23 AM" />
          <Incoming width={884} time="9:23 AM" text="Beri tahu kami dimana RT warga terpapar? Masukkan dalam bentuk angka" />
          <Outgoing text="7" time="9:23 AM" />
          <Incoming width={903} text="Selanjutnya berikan kami informasi" />
        </MessageList>
        <DatePill>March 31</DatePill>
        <ScrollThumb />
      </Chat>

      <Composer onSubmit={(e: React.FormEvent) => e.preventDefault()}>
        <ComposerRow>
          <GifButton type="button">GIF</GifButton>
          <Field>
            <Caret />
            <Input type="text" placeholder="Message" aria-label="Message" />
          </Field>
          <Tools>
            <button type="button" aria-label="Attach"><ClipIcon /></button>
            <button type="button" aria-label="Record voice"><MicIcon /></button>
          </Tools>
        </ComposerRow>
        <HomeBar />
      </Composer>
    </Screen>
  );
}
